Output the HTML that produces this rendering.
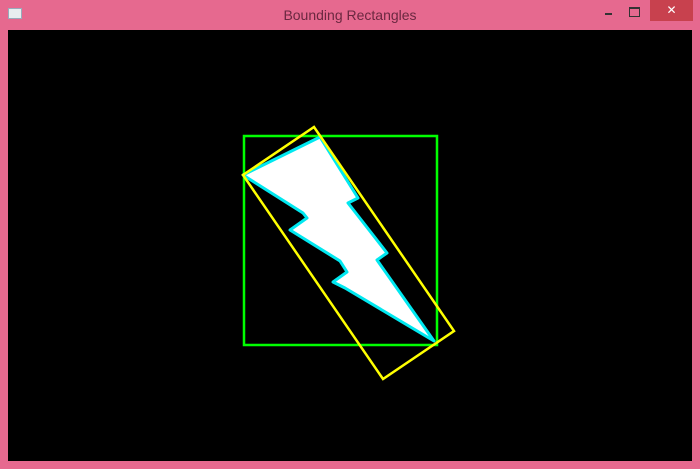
<!DOCTYPE html>
<html><head><style>
html,body{margin:0;padding:0;width:700px;height:469px;overflow:hidden;background:#e6698f;font-family:"Liberation Sans",sans-serif}
.t{position:absolute;left:0;top:0;width:700px;height:30px;text-align:center;line-height:31px;font-size:14px;color:#6b2840}
.c{position:absolute;left:650px;top:0;width:43px;height:21px;background:#c8414e;color:#fff;text-align:center;line-height:20px;font-size:12px}
.cv{position:absolute;left:8px;top:30px;width:684px;height:431px;background:#000}
</style></head><body>
<div class="t">Bounding Rectangles</div>
<div style="position:absolute;left:8px;top:8px;width:12px;height:9px;background:#e8eef0;border:1px solid #9ab"></div>
<div style="position:absolute;left:605px;top:13px;width:7px;height:2px;background:#333"></div>
<div style="position:absolute;left:629px;top:7px;width:9px;height:7px;border:1px solid #333;border-top-width:2px"></div>
<div class="c">✕</div>
<div class="cv"></div>
<svg width="700" height="469" style="position:absolute;left:0;top:0">
<rect x="244" y="136" width="193" height="209" fill="none" stroke="#00ff00" stroke-width="2.5"/>
<polygon points="243,175 320,137 358,198 348,203 387,253 377,260 434,341 345,288 333,282 347,272 340,261 290,230 307,218 303,213" fill="#fff" stroke="#00e8f0" stroke-width="3" stroke-linejoin="round"/>
<polygon points="314,127 454,331 383,379 243,175" fill="none" stroke="#ffff00" stroke-width="2.5"/>
</svg>
</body></html>
